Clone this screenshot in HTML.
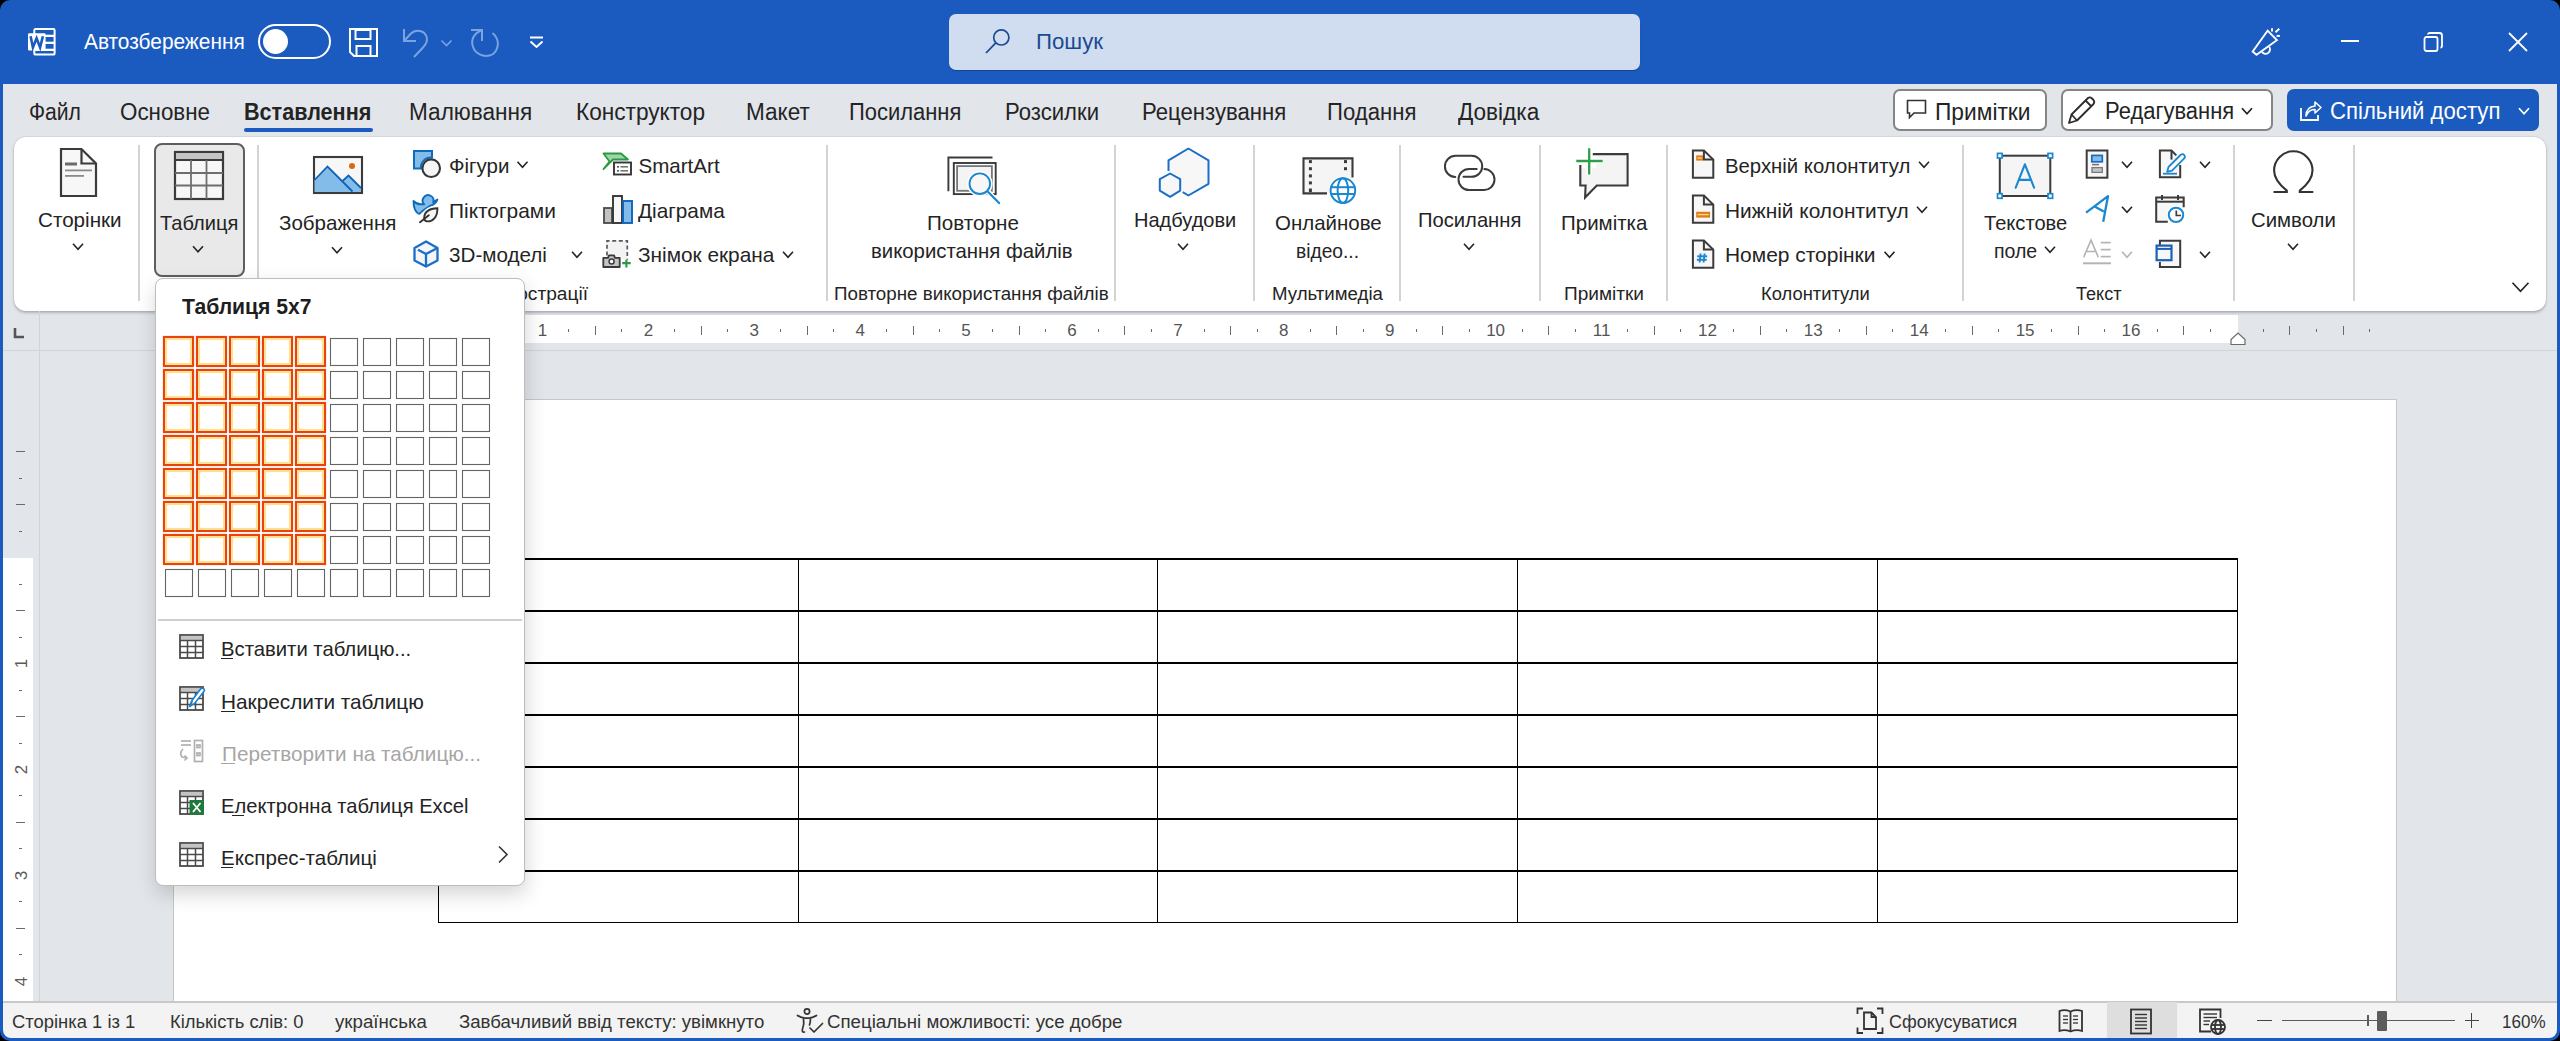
<!DOCTYPE html><html><head><meta charset="utf-8"><style>
html,body{margin:0;padding:0;}
body{width:2560px;height:1041px;position:relative;overflow:hidden;background:#000;font-family:"Liberation Sans",sans-serif;}
.t{position:absolute;white-space:nowrap;line-height:normal;transform-origin:0 0;}
svg{overflow:visible;}
</style></head><body>
<div style="position:absolute;left:0px;top:0px;width:2560px;height:1041px;background:#1b5bbf;border-radius:10px;"></div>
<div style="position:absolute;left:3px;top:84px;width:2554px;height:918px;background:#e2e5ea;"></div>
<div style="position:absolute;left:3px;top:1001px;width:2554px;height:37px;background:#f3f3f3;border-top:2px solid #c8c8c8;box-sizing:border-box;border-radius:0 0 8px 8px;"></div>
<svg style="position:absolute;left:28px;top:28px;" width="28" height="28" viewBox="0 0 28 28">
<rect x="6.3" y="1.1" width="20.3" height="25.5" rx="1.2" fill="none" stroke="#fff" stroke-width="2"/>
<rect x="6" y="6.7" width="21" height="2.3" fill="#fff"/>
<rect x="6" y="13.7" width="21" height="2.3" fill="#fff"/>
<rect x="6" y="20.7" width="21" height="2.3" fill="#fff"/>
<rect x="0" y="5.2" width="17.6" height="17.4" rx="1.3" fill="#fff"/>
<path d="M2.6 8.3 L4.9 19.4 L8.6 10.2 L12.1 19.4 L14.9 8.3" fill="none" stroke="#1b5bbf" stroke-width="2.6" stroke-linejoin="miter"/>
</svg>
<div class="t" style="left:84.20px;top:29.47px;font-size:22.5px;color:#ffffff;transform:scaleX(0.9273);">Автозбереження</div>
<svg style="position:absolute;left:258px;top:24px;" width="73" height="35" viewBox="0 0 73 35"><rect x="1" y="1" width="71" height="33" rx="16.5" fill="none" stroke="#fff" stroke-width="2"/><circle cx="17.5" cy="17.5" r="12.5" fill="#fff"/></svg>
<svg style="position:absolute;left:349px;top:28px;" width="30" height="30" viewBox="0 0 30 30"><path d="M1 1 H28 V28 H5 L1 24 Z" fill="none" stroke="#fff" stroke-width="2"/>
<rect x="6.5" y="2" width="15" height="9" fill="none" stroke="#fff" stroke-width="2"/>
<rect x="7.5" y="18" width="14" height="10" fill="none" stroke="#fff" stroke-width="2"/></svg>
<svg style="position:absolute;left:402px;top:28px;" width="30" height="30" viewBox="0 0 30 30"><g fill="none" stroke="#7aa3e0" stroke-width="2"><path d="M2 1 V13 H14"/><path d="M2.5 12.5 L8.5 6 C13 1.5 22 1.5 24.5 8.5 C26 13 24 16.5 21 19.5 L12 29"/></g></svg>
<svg style="position:absolute;left:440px;top:38px;" width="14" height="9" viewBox="0 0 14 9"><polyline points="1.5,2.5 6.5,7.5 11.5,2.5" fill="none" stroke="#7aa3e0" stroke-width="1.6"/></svg>
<svg style="position:absolute;left:470px;top:28px;" width="30" height="30" viewBox="0 0 30 30"><g fill="none" stroke="#7aa3e0" stroke-width="2"><path d="M1 2 H12 V13"/><path d="M11.5 2.5 C4 5 0.5 12 3 19 C5.5 26 13 29 19.5 27.5 C26 26 29.5 18 27 11 C26 8.5 24.5 6.5 22.5 5"/></g></svg>
<svg style="position:absolute;left:529px;top:36px;" width="16" height="14" viewBox="0 0 16 14"><line x1="1" y1="1.5" x2="14" y2="1.5" stroke="#fff" stroke-width="2"/><polyline points="1.5,5.5 7.5,11 13.5,5.5" fill="none" stroke="#fff" stroke-width="2"/></svg>
<div style="position:absolute;left:949px;top:14px;width:691px;height:56px;background:#d0ddf0;border-radius:7px;box-shadow:0 1px 1px rgba(0,0,0,0.25);"></div>
<svg style="position:absolute;left:984px;top:28px;" width="30" height="28" viewBox="0 0 30 28"><circle cx="17.3" cy="9.4" r="7.6" fill="none" stroke="#1b4a92" stroke-width="1.7"/><line x1="11.8" y1="14.8" x2="2" y2="25" stroke="#1b4a92" stroke-width="1.8"/></svg>
<div class="t" style="left:1035.70px;top:29.17px;font-size:22.5px;color:#1b4a92;transform:scaleX(0.9882);">Пошук</div>
<svg style="position:absolute;left:2250px;top:26px;" width="34" height="34" viewBox="0 0 34 34"><g fill="none" stroke="#fff" stroke-width="1.9" stroke-linejoin="miter">
<path d="M17.6 4.7 L26.9 14.2 L6.5 28.7 L2.7 25.5 Z"/>
<path d="M12 25.9 A4 4 0 0 0 19.2 20.8"/>
<line x1="22" y1="2.3" x2="22" y2="5.5"/><line x1="25.5" y1="6.3" x2="29.3" y2="2.7"/><line x1="26.5" y1="9.9" x2="29.9" y2="9.9"/>
</g></svg>
<div style="position:absolute;left:2341px;top:40px;width:18px;height:2px;background:#fff;"></div>
<svg style="position:absolute;left:2423px;top:32px;" width="22" height="22" viewBox="0 0 22 22"><rect x="1.5" y="5" width="13" height="14" rx="2" fill="none" stroke="#fff" stroke-width="1.8"/><path d="M5 2.5 Q5 1 7 1 H16.5 Q19 1 19 3.5 V13.5 Q19 15.5 17.5 15.5" fill="none" stroke="#fff" stroke-width="1.8"/></svg>
<svg style="position:absolute;left:2508px;top:32px;" width="20" height="20" viewBox="0 0 20 20"><line x1="1" y1="1" x2="19" y2="19" stroke="#fff" stroke-width="1.8"/><line x1="19" y1="1" x2="1" y2="19" stroke="#fff" stroke-width="1.8"/></svg>
<div class="t" style="left:28.80px;top:99.11px;font-size:23px;color:#242424;transform:scaleX(0.9186);">Файл</div>
<div class="t" style="left:119.50px;top:99.11px;font-size:23px;color:#242424;transform:scaleX(0.9719);">Основне</div>
<div class="t" style="left:244.30px;top:99.11px;font-size:23px;color:#242424;font-weight:bold;transform:scaleX(0.9388);">Вставлення</div>
<div style="position:absolute;left:244px;top:128px;width:129px;height:4px;background:#1b5bbf;border-radius:2px;"></div>
<div class="t" style="left:409.20px;top:99.11px;font-size:23px;color:#242424;transform:scaleX(0.9825);">Малювання</div>
<div class="t" style="left:575.80px;top:99.11px;font-size:23px;color:#242424;transform:scaleX(0.9840);">Конструктор</div>
<div class="t" style="left:746.00px;top:99.11px;font-size:23px;color:#242424;transform:scaleX(0.9800);">Макет</div>
<div class="t" style="left:849.40px;top:99.11px;font-size:23px;color:#242424;transform:scaleX(0.9541);">Посилання</div>
<div class="t" style="left:1005.40px;top:99.11px;font-size:23px;color:#242424;transform:scaleX(0.9611);">Розсилки</div>
<div class="t" style="left:1141.50px;top:99.11px;font-size:23px;color:#242424;transform:scaleX(0.9620);">Рецензування</div>
<div class="t" style="left:1327.30px;top:99.11px;font-size:23px;color:#242424;transform:scaleX(0.9623);">Подання</div>
<div class="t" style="left:1458.40px;top:99.11px;font-size:23px;color:#242424;transform:scaleX(0.9819);">Довідка</div>
<div style="position:absolute;left:1893px;top:89px;width:154px;height:42px;background:#fff;border:2px solid #858585;border-radius:7px;box-sizing:border-box;"></div>
<svg style="position:absolute;left:1906px;top:99px;" width="22" height="22" viewBox="0 0 22 22"><path d="M1.5 1.5 H19.5 V14 H8 L3.5 18.5 V14 H1.5 Z" fill="none" stroke="#333" stroke-width="1.6"/></svg>
<div class="t" style="left:1934.50px;top:98.61px;font-size:23px;color:#242424;transform:scaleX(0.9896);">Примітки</div>
<div style="position:absolute;left:2061px;top:89px;width:212px;height:42px;background:#fff;border:2px solid #858585;border-radius:7px;box-sizing:border-box;"></div>
<svg style="position:absolute;left:2066px;top:96px;" width="30" height="30" viewBox="0 0 30 30"><path d="M3 27 L5.5 18.5 L22 2 Q24 0.5 26 2.5 L27.5 4 Q29 6 27.5 8 L11 24.5 Z M19.5 4.5 L25 10 M5.5 18.5 L11 24.5" fill="none" stroke="#2a2a2a" stroke-width="1.8" stroke-linejoin="round"/></svg>
<div class="t" style="left:2104.50px;top:98.31px;font-size:23px;color:#242424;transform:scaleX(0.9549);">Редагування</div>
<svg style="position:absolute;left:2240px;top:106px;" width="14" height="9" viewBox="0 0 14 9"><polyline points="2.0,2.25 7.0,7.75 12.0,2.25" fill="none" stroke="#242424" stroke-width="1.8"/></svg>
<div style="position:absolute;left:2287px;top:89px;width:252px;height:42px;background:#1b5bbf;border-radius:7px;"></div>
<svg style="position:absolute;left:2299px;top:98px;" width="24" height="24" viewBox="0 0 24 24"><path d="M2 10 V22 H19 V17" fill="none" stroke="#fff" stroke-width="1.8"/><path d="M7 18 Q7 9 16 8 V4 L22 9.5 L16 15 V11.5 Q10 11 7 18 Z" fill="none" stroke="#fff" stroke-width="1.6" stroke-linejoin="round"/></svg>
<div class="t" style="left:2329.60px;top:98.31px;font-size:23px;color:#ffffff;transform:scaleX(0.9638);">Спільний доступ</div>
<svg style="position:absolute;left:2517px;top:106px;" width="14" height="9" viewBox="0 0 14 9"><polyline points="2.0,2.25 7.0,7.75 12.0,2.25" fill="none" stroke="#ffffff" stroke-width="1.8"/></svg>
<div style="position:absolute;left:14px;top:137px;width:2532px;height:174px;background:#fff;border-radius:12px;box-shadow:0 0 0 0.6px rgba(0,0,0,0.07),0 1.5px 3px rgba(0,0,0,0.22);"></div>
<div style="position:absolute;left:138px;top:145px;width:2px;height:156px;background:#d3d3d3;"></div>
<div style="position:absolute;left:257px;top:145px;width:2px;height:156px;background:#d3d3d3;"></div>
<div style="position:absolute;left:826px;top:145px;width:2px;height:156px;background:#d3d3d3;"></div>
<div style="position:absolute;left:1114px;top:145px;width:2px;height:156px;background:#d3d3d3;"></div>
<div style="position:absolute;left:1253px;top:145px;width:2px;height:156px;background:#d3d3d3;"></div>
<div style="position:absolute;left:1399px;top:145px;width:2px;height:156px;background:#d3d3d3;"></div>
<div style="position:absolute;left:1539px;top:145px;width:2px;height:156px;background:#d3d3d3;"></div>
<div style="position:absolute;left:1666px;top:145px;width:2px;height:156px;background:#d3d3d3;"></div>
<div style="position:absolute;left:1962px;top:145px;width:2px;height:156px;background:#d3d3d3;"></div>
<div style="position:absolute;left:2233px;top:145px;width:2px;height:156px;background:#d3d3d3;"></div>
<div style="position:absolute;left:2353px;top:145px;width:2px;height:156px;background:#d3d3d3;"></div>
<svg style="position:absolute;left:59px;top:147px;" width="40" height="52" viewBox="0 0 40 52"><path d="M2 2 H22.5 L37 16.5 V49 H2 Z" fill="#f7f7f7" stroke="#3b3b3b" stroke-width="2.2"/>
<path d="M22.5 2 V16.5 H37" fill="none" stroke="#3b3b3b" stroke-width="2.2"/>
<rect x="6" y="15.5" width="12" height="3" fill="#6b6b6b"/>
<rect x="6" y="22.5" width="27" height="1.8" fill="#8a8a8a"/>
<rect x="6" y="28" width="19" height="1.8" fill="#8a8a8a"/></svg>
<div class="t" style="left:37.70px;top:207.82px;font-size:20.6px;color:#242424;transform:scaleX(1.0024);">Сторінки</div>
<svg style="position:absolute;left:71px;top:242px;" width="14" height="9" viewBox="0 0 14 9"><polyline points="2.0,1.75 7.0,7.25 12.0,1.75" fill="none" stroke="#242424" stroke-width="1.6"/></svg>
<div style="position:absolute;left:154px;top:143px;width:91px;height:134px;background:#e9e9e9;border:2px solid #5e5e5e;border-radius:8px;box-sizing:border-box;"></div>
<svg style="position:absolute;left:173px;top:150px;" width="52" height="52" viewBox="0 0 52 52"><rect x="2" y="2" width="48" height="47" fill="#f7f7f7" stroke="#3b3b3b" stroke-width="2.2"/>
<rect x="3" y="3" width="46" height="6.5" fill="#c4c4c4"/>
<line x1="2" y1="10" x2="50" y2="10" stroke="#3b3b3b" stroke-width="2"/>
<line x1="2" y1="23" x2="50" y2="23" stroke="#6e6e6e" stroke-width="1.8"/>
<line x1="2" y1="35.5" x2="50" y2="35.5" stroke="#6e6e6e" stroke-width="1.8"/>
<line x1="18" y1="10" x2="18" y2="49" stroke="#6e6e6e" stroke-width="1.8"/>
<line x1="33.5" y1="10" x2="33.5" y2="49" stroke="#6e6e6e" stroke-width="1.8"/></svg>
<div class="t" style="left:159.80px;top:211.22px;font-size:20.6px;color:#242424;transform:scaleX(0.9739);">Таблиця</div>
<svg style="position:absolute;left:191px;top:244px;" width="14" height="9" viewBox="0 0 14 9"><polyline points="2.0,2.25 7.0,7.75 12.0,2.25" fill="none" stroke="#242424" stroke-width="1.6"/></svg>
<svg style="position:absolute;left:312px;top:155px;" width="52" height="40" viewBox="0 0 52 40"><rect x="2" y="2" width="48" height="36" fill="#f7f7f7" stroke="#3b3b3b" stroke-width="2.1"/>
<path d="M2.5 25 L15.5 11.5 L30.5 26 L36.5 20.6 L49 33 V37 H2.5 Z" fill="#83bbe9"/>
<path d="M2.5 25 L15.5 11.5 L40.5 36.5" fill="none" stroke="#0f64b8" stroke-width="1.8"/>
<path d="M30.5 26 L36.5 20.6 L49 33" fill="none" stroke="#0f64b8" stroke-width="1.8"/>
<circle cx="40" cy="11" r="3" fill="#d86a0f"/></svg>
<div class="t" style="left:278.80px;top:210.82px;font-size:20.6px;color:#242424;transform:scaleX(0.9975);">Зображення</div>
<svg style="position:absolute;left:330px;top:245px;" width="14" height="9" viewBox="0 0 14 9"><polyline points="2.0,2.25 7.0,7.75 12.0,2.25" fill="none" stroke="#242424" stroke-width="1.6"/></svg>
<svg style="position:absolute;left:412px;top:149px;" width="32" height="32" viewBox="0 0 32 32"><path d="M2 2 H20 V8.5 A10 10 0 0 0 9 19.5 H2 Z" fill="#83bbe9" stroke="#0f6cbd" stroke-width="2"/>
<circle cx="19.2" cy="19.2" r="8.8" fill="#f5f5f5" stroke="#363636" stroke-width="2.1"/></svg>
<div class="t" style="left:448.60px;top:153.72px;font-size:20.6px;color:#242424;transform:scaleX(0.9934);">Фігури</div>
<svg style="position:absolute;left:516px;top:160px;" width="14" height="9" viewBox="0 0 14 9"><polyline points="1.5,1.75 6.5,7.25 11.5,1.75" fill="none" stroke="#242424" stroke-width="1.6"/></svg>
<svg style="position:absolute;left:412px;top:194px;" width="30" height="32" viewBox="0 0 30 32"><path d="M1.5 7 Q4.5 10.4 9 10.3 H12.2 A5.4 5.4 0 1 1 21.2 8.3 L25.4 5.6 Q24 10.5 17.8 12 L12.5 15.5 Q8.5 18.5 7.2 20 Q1.5 17.5 1.5 7 Z" fill="#83bbe9" stroke="#0f6cbd" stroke-width="1.9" stroke-linejoin="round"/>
<path d="M25.4 14.3 C25.8 23 20.5 28 14.8 27.3 Q12.3 26.8 12.2 24.5 C12 17.5 17.5 14.5 25.4 14.3 Z" fill="#f5f5f5" stroke="#fff" stroke-width="5"/>
<path d="M25.4 14.3 C25.8 23 20.5 28 14.8 27.3 Q12.3 26.8 12.2 24.5 C12 17.5 17.5 14.5 25.4 14.3 Z" fill="#f5f5f5" stroke="#333" stroke-width="1.9"/>
<path d="M8 28.2 L16.8 21.3" stroke="#333" stroke-width="1.9" stroke-linecap="round"/></svg>
<div class="t" style="left:449.40px;top:198.52px;font-size:20.6px;color:#242424;transform:scaleX(1.0142);">Піктограми</div>
<svg style="position:absolute;left:413px;top:240px;" width="27" height="28" viewBox="0 0 27 28"><g fill="#f5f5f5" stroke="#1a6ec8" stroke-width="2.3" stroke-linejoin="round">
<path d="M13 1.5 L24.5 8 V20.5 L13 26.5 L1.5 20.5 V8 Z"/>
<path d="M24.5 8 L13 14 V26.5 M13 14 L5 9.7" fill="none"/>
</g></svg>
<div class="t" style="left:448.60px;top:242.62px;font-size:20.6px;color:#242424;transform:scaleX(1.0020);">3D-моделі</div>
<svg style="position:absolute;left:570px;top:250px;" width="14" height="9" viewBox="0 0 14 9"><polyline points="2.0,1.75 7.0,7.25 12.0,1.75" fill="none" stroke="#242424" stroke-width="1.6"/></svg>
<svg style="position:absolute;left:602px;top:152px;" width="31" height="25" viewBox="0 0 31 25"><path d="M1.5 1.5 H19 L26 7.5 H11 L1.5 17 L7.5 9.5 Z" fill="#9fd6a8" stroke="#2b9a44" stroke-width="1.8" stroke-linejoin="round"/>
<rect x="12" y="10.5" width="17" height="12" fill="#fff" stroke="#363636" stroke-width="1.9"/>
<rect x="15" y="14" width="2" height="1.6" fill="#555"/><rect x="18.5" y="14" width="7.5" height="1.6" fill="#777"/>
<rect x="15" y="18" width="2" height="1.6" fill="#555"/><rect x="18.5" y="18" width="7.5" height="1.6" fill="#777"/></svg>
<div class="t" style="left:638.40px;top:153.72px;font-size:20.6px;color:#242424;">SmartArt</div>
<svg style="position:absolute;left:602px;top:194px;" width="31" height="31" viewBox="0 0 31 31"><rect x="2" y="14" width="8" height="15" fill="#c2c2c2" stroke="#4a4a4a" stroke-width="1.8"/>
<rect x="11" y="2" width="9" height="27" fill="#f7f7f7" stroke="#363636" stroke-width="1.9"/>
<rect x="21" y="7" width="9" height="22" fill="#83bbe9" stroke="#0f64b8" stroke-width="1.9"/></svg>
<div class="t" style="left:638.20px;top:199.02px;font-size:20.6px;color:#242424;transform:scaleX(1.0081);">Діаграма</div>
<svg style="position:absolute;left:602px;top:239px;" width="31" height="31" viewBox="0 0 31 31"><path d="M5 16.4 V1.8 H25.3 V20.7" fill="#f3f3f3" stroke="#5a5a5a" stroke-width="1.7" stroke-dasharray="4 2.6"/>
<path d="M1.3 18.9 H6 L7 16.4 H12 L13 18.9 H17.7 V28 H1.3 Z" fill="#c4c4c4" stroke="#3a3a3a" stroke-width="1.8" stroke-linejoin="round"/>
<circle cx="9.6" cy="22.6" r="2.5" fill="#fff" stroke="#3a3a3a" stroke-width="1.5"/>
<path d="M24.4 20.7 V28.6 M20.2 24.1 H28.7" stroke="#2b9a44" stroke-width="2.1"/></svg>
<div class="t" style="left:638.30px;top:242.62px;font-size:20.6px;color:#242424;transform:scaleX(1.0104);">Знімок екрана</div>
<svg style="position:absolute;left:781px;top:250px;" width="14" height="9" viewBox="0 0 14 9"><polyline points="2.0,1.75 7.0,7.25 12.0,1.75" fill="none" stroke="#242424" stroke-width="1.6"/></svg>
<div class="t" style="left:497.00px;top:284.47px;font-size:17.5px;color:#242424;transform:scaleX(1.0938);">Ілюстрації</div>
<svg style="position:absolute;left:946px;top:155px;" width="56" height="52" viewBox="0 0 56 52"><path d="M2.4 36.2 V2.5 H46.5" fill="none" stroke="#3a3a3a" stroke-width="1.9"/>
<rect x="7.8" y="8" width="41.9" height="31.1" fill="#fff" stroke="#3a3a3a" stroke-width="1.9"/>
<rect x="11.1" y="11.1" width="34.8" height="24.7" fill="#f4f4f4" stroke="#777" stroke-width="1.8"/>
<circle cx="33.8" cy="28.7" r="10.3" fill="#f7f7f7" stroke="#fff" stroke-width="5"/>
<line x1="41.9" y1="36.8" x2="53.1" y2="48.1" stroke="#fff" stroke-width="5"/>
<circle cx="33.8" cy="28.7" r="10.3" fill="#f7f7f7" stroke="#1b87d0" stroke-width="1.9"/>
<line x1="41.9" y1="36.8" x2="53.1" y2="48.1" stroke="#1b87d0" stroke-width="2.2" stroke-linecap="round"/></svg>
<div class="t" style="left:926.50px;top:210.82px;font-size:20.6px;color:#242424;transform:scaleX(1.0022);">Повторне</div>
<div class="t" style="left:871.40px;top:239.22px;font-size:20.6px;color:#242424;transform:scaleX(0.9878);">використання файлів</div>
<div class="t" style="left:834.40px;top:284.47px;font-size:17.5px;color:#242424;transform:scaleX(1.0718);">Повторне використання файлів</div>
<svg style="position:absolute;left:1157px;top:147px;" width="54" height="54" viewBox="0 0 54 54"><g fill="#f7f7f7" stroke="#1a6ec8" stroke-width="2" stroke-linejoin="round">
<path d="M11.5 24 V13.4 L31.4 1.5 L51.5 13.4 V36.8 L31.4 48.5 L25.7 45.2"/>
<path d="M13.1 26.5 L23.2 32.2 V43.6 L13.1 49.8 L2.8 43.6 V32.2 Z"/>
</g></svg>
<div class="t" style="left:1133.70px;top:207.92px;font-size:20.6px;color:#242424;transform:scaleX(0.9724);">Надбудови</div>
<svg style="position:absolute;left:1176px;top:242px;" width="14" height="9" viewBox="0 0 14 9"><polyline points="2.0,1.75 7.0,7.25 12.0,1.75" fill="none" stroke="#242424" stroke-width="1.6"/></svg>
<svg style="position:absolute;left:1302px;top:157px;" width="57" height="50" viewBox="0 0 57 50"><path d="M25 36.4 H1.5 V1.4 H50.5 V20.5" fill="#f5f5f5" stroke="#3b3b3b" stroke-width="2.1"/>
<g fill="#3b3b3b"><rect x="6.9" y="3.1" width="3" height="3"/><rect x="6.9" y="10.2" width="3" height="3"/><rect x="6.9" y="17.4" width="3" height="3"/><rect x="6.9" y="24.4" width="3" height="3"/><rect x="6.9" y="31.5" width="3" height="3.5"/>
<rect x="42" y="3.1" width="3" height="3"/><rect x="42" y="10.2" width="3" height="3"/></g>
<circle cx="40.9" cy="33.6" r="14" fill="#fff"/>
<g fill="none" stroke="#1b87d0" stroke-width="2"><circle cx="40.9" cy="33.6" r="12.3"/><ellipse cx="40.9" cy="33.6" rx="5.3" ry="12.3"/><line x1="28.6" y1="30.2" x2="53.2" y2="30.2"/><line x1="28.6" y1="37" x2="53.2" y2="37"/></g></svg>
<div class="t" style="left:1274.60px;top:210.52px;font-size:20.6px;color:#242424;transform:scaleX(0.9944);">Онлайнове</div>
<div class="t" style="left:1296.00px;top:239.22px;font-size:20.6px;color:#242424;transform:scaleX(0.9320);">відео...</div>
<div class="t" style="left:1271.70px;top:284.47px;font-size:17.5px;color:#242424;transform:scaleX(1.0653);">Мультимедіа</div>
<svg style="position:absolute;left:1444px;top:154px;" width="52" height="40" viewBox="0 0 52 40"><g fill="none" stroke="#3b3b3b" stroke-width="2" stroke-linecap="round">
<path d="M11.3 23 A10.5 10.5 0 0 1 11.8 1.8 H27.7 A10.5 10.5 0 0 1 27.7 22.8 H19.5"/>
<path d="M32.7 15 H25 A10.5 10.5 0 0 0 25 36 H39.6 A10.5 10.5 0 0 0 40.4 15"/>
</g></svg>
<div class="t" style="left:1418.30px;top:207.92px;font-size:20.6px;color:#242424;transform:scaleX(0.9801);">Посилання</div>
<svg style="position:absolute;left:1462px;top:242px;" width="14" height="9" viewBox="0 0 14 9"><polyline points="2.0,1.75 7.0,7.25 12.0,1.75" fill="none" stroke="#242424" stroke-width="1.6"/></svg>
<svg style="position:absolute;left:1574px;top:146px;" width="57" height="54" viewBox="0 0 57 54"><path d="M6.3 19 V39.5 H11.6 L11.1 51.6 L22.8 39.5 H53.6 V8.1 H18.8" fill="#f4f4f4" stroke="#3b3b3b" stroke-width="2.1" stroke-linejoin="miter"/>
<rect x="8" y="10" width="14" height="12" fill="#fff"/>
<path d="M15.2 2.3 V28.6 M2.3 15 H28.7" stroke="#fff" stroke-width="5"/>
<path d="M15.2 2.3 V28.6 M2.3 15 H28.7" stroke="#2f9e4b" stroke-width="2.3"/></svg>
<div class="t" style="left:1561.40px;top:210.52px;font-size:20.6px;color:#242424;transform:scaleX(0.9954);">Примітка</div>
<div class="t" style="left:1564.00px;top:284.47px;font-size:17.5px;color:#242424;transform:scaleX(1.0884);">Примітки</div>
<svg style="position:absolute;left:1691px;top:149px;" width="24" height="31" viewBox="0 0 24 31"><path d="M1.9 1.5 H12.9 L22.3 10.6 V28.7 H1.9 Z" fill="#f7f7f7" stroke="#3b3b3b" stroke-width="2"/><path d="M12.9 1.5 V10.6 H22.3" fill="none" stroke="#3b3b3b" stroke-width="2"/><rect x="5.2" y="6.4" width="6.8" height="5.2" fill="#e07b12"/><rect x="6.5" y="8.4" width="4.5" height="1.3" fill="#ffd596"/></svg>
<div class="t" style="left:1725.30px;top:153.72px;font-size:20.6px;color:#242424;transform:scaleX(0.9872);">Верхній колонтитул</div>
<svg style="position:absolute;left:1917px;top:160px;" width="14" height="9" viewBox="0 0 14 9"><polyline points="2.0,1.75 7.0,7.25 12.0,1.75" fill="none" stroke="#242424" stroke-width="1.6"/></svg>
<svg style="position:absolute;left:1691px;top:194px;" width="24" height="31" viewBox="0 0 24 31"><path d="M1.9 1.5 H12.9 L22.3 10.6 V28.7 H1.9 Z" fill="#f7f7f7" stroke="#3b3b3b" stroke-width="2"/><path d="M12.9 1.5 V10.6 H22.3" fill="none" stroke="#3b3b3b" stroke-width="2"/><rect x="5.2" y="17.8" width="13.8" height="5.8" fill="#e07b12"/><rect x="6.6" y="19.9" width="11" height="1.4" fill="#ffd596"/></svg>
<div class="t" style="left:1725.30px;top:199.02px;font-size:20.6px;color:#242424;transform:scaleX(1.0138);">Нижній колонтитул</div>
<svg style="position:absolute;left:1915px;top:205px;" width="14" height="9" viewBox="0 0 14 9"><polyline points="2.0,1.75 7.0,7.25 12.0,1.75" fill="none" stroke="#242424" stroke-width="1.6"/></svg>
<svg style="position:absolute;left:1691px;top:239px;" width="24" height="31" viewBox="0 0 24 31"><path d="M1.9 1.5 H12.9 L22.3 10.6 V28.7 H1.9 Z" fill="#f7f7f7" stroke="#3b3b3b" stroke-width="2"/><path d="M12.9 1.5 V10.6 H22.3" fill="none" stroke="#3b3b3b" stroke-width="2"/><g stroke="#1b87d0" stroke-width="1.9"><line x1="9.6" y1="14.5" x2="8.6" y2="23.5"/><line x1="13.6" y1="14.5" x2="12.6" y2="23.5"/><line x1="6.2" y1="17.3" x2="16.2" y2="17.3"/><line x1="5.8" y1="20.8" x2="15.8" y2="20.8"/></g></svg>
<div class="t" style="left:1725.30px;top:242.62px;font-size:20.6px;color:#242424;transform:scaleX(1.0169);">Номер сторінки</div>
<svg style="position:absolute;left:1882px;top:250px;" width="14" height="9" viewBox="0 0 14 9"><polyline points="2.5,1.75 7.5,7.25 12.5,1.75" fill="none" stroke="#242424" stroke-width="1.6"/></svg>
<div class="t" style="left:1761.00px;top:284.47px;font-size:17.5px;color:#242424;transform:scaleX(1.0492);">Колонтитули</div>
<svg style="position:absolute;left:1996px;top:152px;" width="58" height="48" viewBox="0 0 58 48"><rect x="3.8" y="3.7" width="50.5" height="40.3" fill="#f5f5f5" stroke="#3b3b3b" stroke-width="2"/>
<g fill="#fff" stroke="#1b87d0" stroke-width="1.7"><rect x="1.5" y="1.4" width="4.6" height="4.6"/><rect x="52" y="1.4" width="4.6" height="4.6"/><rect x="1.5" y="41.7" width="4.6" height="4.6"/><rect x="52" y="41.7" width="4.6" height="4.6"/></g>
<path d="M19.7 35.7 L28.9 12.3 L38.1 35.7 M23.5 27.9 H34.5" fill="none" stroke="#1b87d0" stroke-width="2.1" stroke-linecap="round" stroke-linejoin="round"/></svg>
<div class="t" style="left:1983.70px;top:210.52px;font-size:20.6px;color:#242424;transform:scaleX(0.9766);">Текстове</div>
<div class="t" style="left:1993.50px;top:239.22px;font-size:20.6px;color:#242424;transform:scaleX(0.9474);">поле</div>
<svg style="position:absolute;left:2043px;top:245px;" width="14" height="9" viewBox="0 0 14 9"><polyline points="2.0,1.75 7.0,7.25 12.0,1.75" fill="none" stroke="#242424" stroke-width="1.6"/></svg>
<svg style="position:absolute;left:2085px;top:149px;" width="24" height="30" viewBox="0 0 24 30"><rect x="1.7" y="1.5" width="20.7" height="27.2" fill="#f7f7f7" stroke="#3b3b3b" stroke-width="2"/>
<rect x="6.8" y="6.4" width="10.5" height="6.4" fill="#83bbe9" stroke="#1b6cc0" stroke-width="1.7"/>
<rect x="7" y="14.8" width="7" height="1.6" fill="#777"/>
<rect x="7" y="18.6" width="10.3" height="4.8" fill="#c4c4c4" stroke="#7a7a7a" stroke-width="1.3"/></svg>
<svg style="position:absolute;left:2120px;top:160px;" width="14" height="9" viewBox="0 0 14 9"><polyline points="2.0,1.75 7.0,7.25 12.0,1.75" fill="none" stroke="#242424" stroke-width="1.6"/></svg>
<svg style="position:absolute;left:2084px;top:194px;" width="28" height="30" viewBox="0 0 28 30"><path d="M2.1 18.7 L24 2.2 L19.2 27.8 M10.6 12.6 L19.8 17.5" fill="none" stroke="#1b87d0" stroke-width="2.3" stroke-linejoin="round"/></svg>
<svg style="position:absolute;left:2120px;top:205px;" width="14" height="9" viewBox="0 0 14 9"><polyline points="2.0,1.75 7.0,7.25 12.0,1.75" fill="none" stroke="#242424" stroke-width="1.6"/></svg>
<svg style="position:absolute;left:2082px;top:239px;" width="30" height="28" viewBox="0 0 30 28"><path d="M1.7 18.2 L9 1.1 L16.3 18.2 M4.3 12.5 H13.7" fill="none" stroke="#b4b4b4" stroke-width="1.6"/>
<g stroke="#b4b4b4" stroke-width="1.7"><line x1="18.7" y1="3.6" x2="28.7" y2="3.6"/><line x1="18.7" y1="10.6" x2="28.7" y2="10.6"/><line x1="18.7" y1="17.6" x2="28.7" y2="17.6"/><line x1="1" y1="24.3" x2="29" y2="24.3" stroke-width="2"/></g></svg>
<svg style="position:absolute;left:2120px;top:250px;" width="14" height="9" viewBox="0 0 14 9"><polyline points="2.0,1.75 7.0,7.25 12.0,1.75" fill="none" stroke="#b4b4b4" stroke-width="1.6"/></svg>
<svg style="position:absolute;left:2158px;top:149px;" width="28" height="30" viewBox="0 0 28 30"><path d="M22.2 16 V28.3 H1.9 V1.5 H13.5 L18.3 6.4" fill="#f7f7f7" stroke="#3b3b3b" stroke-width="2"/>
<path d="M13.5 1.5 V10.6" fill="none" stroke="#3b3b3b" stroke-width="2"/>
<path d="M9.2 22.8 L10.5 18 L22.5 6 Q24.5 4.3 26.2 6 Q27.8 7.8 26 9.6 L14 21.6 Z" fill="#fff" stroke="#1b87d0" stroke-width="1.8" stroke-linejoin="round"/>
<line x1="5" y1="24.7" x2="19" y2="24.7" stroke="#1b87d0" stroke-width="1.8"/></svg>
<svg style="position:absolute;left:2198px;top:160px;" width="14" height="9" viewBox="0 0 14 9"><polyline points="2.0,1.75 7.0,7.25 12.0,1.75" fill="none" stroke="#242424" stroke-width="1.6"/></svg>
<svg style="position:absolute;left:2155px;top:194px;" width="31" height="31" viewBox="0 0 31 31"><path d="M12.8 27.8 H1.2 V3.4 H28.7 V13.2" fill="#f7f7f7" stroke="#3b3b3b" stroke-width="2"/>
<path d="M1.2 7.7 H28.7" stroke="#3b3b3b" stroke-width="2"/>
<line x1="7" y1="1" x2="7" y2="6" stroke="#3b3b3b" stroke-width="2"/><line x1="23" y1="1" x2="23" y2="6" stroke="#3b3b3b" stroke-width="2"/>
<circle cx="21" cy="20.9" r="9.2" fill="#fff"/>
<circle cx="21" cy="20.9" r="7.2" fill="#fff" stroke="#1b87d0" stroke-width="2"/>
<path d="M21.3 16.5 V21.5 H26" fill="none" stroke="#3b3b3b" stroke-width="1.7"/></svg>
<svg style="position:absolute;left:2155px;top:239px;" width="29" height="31" viewBox="0 0 29 31"><path d="M4.9 6 V1.7 H25.2 V28 H4.9 V23" fill="#f7f7f7" stroke="#3b3b3b" stroke-width="2"/>
<rect x="1.6" y="6.6" width="14.9" height="14.6" fill="#f7f7f7" stroke="#1b5fb8" stroke-width="2.2"/>
<line x1="1.6" y1="9.9" x2="16.5" y2="9.9" stroke="#1b5fb8" stroke-width="2"/></svg>
<svg style="position:absolute;left:2198px;top:250px;" width="14" height="9" viewBox="0 0 14 9"><polyline points="2.0,1.75 7.0,7.25 12.0,1.75" fill="none" stroke="#242424" stroke-width="1.6"/></svg>
<div class="t" style="left:2076.00px;top:284.47px;font-size:17.5px;color:#242424;transform:scaleX(1.0340);">Текст</div>
<svg style="position:absolute;left:2270px;top:150px;" width="47" height="46" viewBox="0 0 47 46"><path d="M3.5 42 H16.8 V40.6 C8.5 34 4.1 27.5 4.1 20.5 A19.2 19.2 0 0 1 42.5 20.5 C42.5 27.5 38.1 34 29.8 40.6 V42 H43.3" fill="none" stroke="#333" stroke-width="2.1"/></svg>
<div class="t" style="left:2251.40px;top:207.92px;font-size:20.6px;color:#242424;transform:scaleX(0.9895);">Символи</div>
<svg style="position:absolute;left:2286px;top:242px;" width="14" height="9" viewBox="0 0 14 9"><polyline points="2.0,1.75 7.0,7.25 12.0,1.75" fill="none" stroke="#242424" stroke-width="1.6"/></svg>
<svg style="position:absolute;left:2510px;top:281px;" width="20" height="12" viewBox="0 0 20 12"><polyline points="2.5,1.75 10.5,10.25 18.5,1.75" fill="none" stroke="#242424" stroke-width="1.7"/></svg>
<div style="position:absolute;left:3px;top:350px;width:2554px;height:1px;background:#d3d3d3;"></div>
<div style="position:absolute;left:39px;top:311px;width:1px;height:690px;background:#d3d3d3;"></div>
<svg style="position:absolute;left:13px;top:327px;" width="13" height="13" viewBox="0 0 13 13"><path d="M2 1 V10 H11" fill="none" stroke="#555" stroke-width="2.6"/></svg>
<div style="position:absolute;left:436px;top:315px;width:1802px;height:28px;background:#fff;"></div>
<div style="position:absolute;left:173px;top:399px;width:2224px;height:602px;background:#fff;border:1px solid #c6c6c6;border-bottom:none;box-sizing:border-box;"></div>
<div style="position:absolute;left:3px;top:558px;width:30px;height:443px;background:#fff;"></div>
<div class="t" style="left:537.75px;top:321.33px;font-size:17px;color:#555555;">1</div>
<div style="position:absolute;left:568px;top:329px;width:1px;height:3px;background:#6a6a6a;"></div>
<div style="position:absolute;left:595px;top:326px;width:1px;height:9px;background:#6a6a6a;"></div>
<div style="position:absolute;left:621px;top:329px;width:1px;height:3px;background:#6a6a6a;"></div>
<div class="t" style="left:643.65px;top:321.33px;font-size:17px;color:#555555;">2</div>
<div style="position:absolute;left:674px;top:329px;width:1px;height:3px;background:#6a6a6a;"></div>
<div style="position:absolute;left:701px;top:326px;width:1px;height:9px;background:#6a6a6a;"></div>
<div style="position:absolute;left:727px;top:329px;width:1px;height:3px;background:#6a6a6a;"></div>
<div class="t" style="left:749.55px;top:321.33px;font-size:17px;color:#555555;">3</div>
<div style="position:absolute;left:780px;top:329px;width:1px;height:3px;background:#6a6a6a;"></div>
<div style="position:absolute;left:807px;top:326px;width:1px;height:9px;background:#6a6a6a;"></div>
<div style="position:absolute;left:833px;top:329px;width:1px;height:3px;background:#6a6a6a;"></div>
<div class="t" style="left:855.45px;top:321.33px;font-size:17px;color:#555555;">4</div>
<div style="position:absolute;left:886px;top:329px;width:1px;height:3px;background:#6a6a6a;"></div>
<div style="position:absolute;left:913px;top:326px;width:1px;height:9px;background:#6a6a6a;"></div>
<div style="position:absolute;left:939px;top:329px;width:1px;height:3px;background:#6a6a6a;"></div>
<div class="t" style="left:961.35px;top:321.33px;font-size:17px;color:#555555;">5</div>
<div style="position:absolute;left:992px;top:329px;width:1px;height:3px;background:#6a6a6a;"></div>
<div style="position:absolute;left:1019px;top:326px;width:1px;height:9px;background:#6a6a6a;"></div>
<div style="position:absolute;left:1045px;top:329px;width:1px;height:3px;background:#6a6a6a;"></div>
<div class="t" style="left:1067.25px;top:321.33px;font-size:17px;color:#555555;">6</div>
<div style="position:absolute;left:1098px;top:329px;width:1px;height:3px;background:#6a6a6a;"></div>
<div style="position:absolute;left:1124px;top:326px;width:1px;height:9px;background:#6a6a6a;"></div>
<div style="position:absolute;left:1151px;top:329px;width:1px;height:3px;background:#6a6a6a;"></div>
<div class="t" style="left:1173.15px;top:321.33px;font-size:17px;color:#555555;">7</div>
<div style="position:absolute;left:1204px;top:329px;width:1px;height:3px;background:#6a6a6a;"></div>
<div style="position:absolute;left:1230px;top:326px;width:1px;height:9px;background:#6a6a6a;"></div>
<div style="position:absolute;left:1257px;top:329px;width:1px;height:3px;background:#6a6a6a;"></div>
<div class="t" style="left:1279.05px;top:321.33px;font-size:17px;color:#555555;">8</div>
<div style="position:absolute;left:1310px;top:329px;width:1px;height:3px;background:#6a6a6a;"></div>
<div style="position:absolute;left:1336px;top:326px;width:1px;height:9px;background:#6a6a6a;"></div>
<div style="position:absolute;left:1363px;top:329px;width:1px;height:3px;background:#6a6a6a;"></div>
<div class="t" style="left:1384.95px;top:321.33px;font-size:17px;color:#555555;">9</div>
<div style="position:absolute;left:1416px;top:329px;width:1px;height:3px;background:#6a6a6a;"></div>
<div style="position:absolute;left:1442px;top:326px;width:1px;height:9px;background:#6a6a6a;"></div>
<div style="position:absolute;left:1469px;top:329px;width:1px;height:3px;background:#6a6a6a;"></div>
<div class="t" style="left:1486.15px;top:321.33px;font-size:17px;color:#555555;">10</div>
<div style="position:absolute;left:1522px;top:329px;width:1px;height:3px;background:#6a6a6a;"></div>
<div style="position:absolute;left:1548px;top:326px;width:1px;height:9px;background:#6a6a6a;"></div>
<div style="position:absolute;left:1575px;top:329px;width:1px;height:3px;background:#6a6a6a;"></div>
<div class="t" style="left:1592.70px;top:321.33px;font-size:17px;color:#555555;">11</div>
<div style="position:absolute;left:1627px;top:329px;width:1px;height:3px;background:#6a6a6a;"></div>
<div style="position:absolute;left:1654px;top:326px;width:1px;height:9px;background:#6a6a6a;"></div>
<div style="position:absolute;left:1680px;top:329px;width:1px;height:3px;background:#6a6a6a;"></div>
<div class="t" style="left:1697.95px;top:321.33px;font-size:17px;color:#555555;">12</div>
<div style="position:absolute;left:1733px;top:329px;width:1px;height:3px;background:#6a6a6a;"></div>
<div style="position:absolute;left:1760px;top:326px;width:1px;height:9px;background:#6a6a6a;"></div>
<div style="position:absolute;left:1786px;top:329px;width:1px;height:3px;background:#6a6a6a;"></div>
<div class="t" style="left:1803.85px;top:321.33px;font-size:17px;color:#555555;">13</div>
<div style="position:absolute;left:1839px;top:329px;width:1px;height:3px;background:#6a6a6a;"></div>
<div style="position:absolute;left:1866px;top:326px;width:1px;height:9px;background:#6a6a6a;"></div>
<div style="position:absolute;left:1892px;top:329px;width:1px;height:3px;background:#6a6a6a;"></div>
<div class="t" style="left:1909.75px;top:321.33px;font-size:17px;color:#555555;">14</div>
<div style="position:absolute;left:1945px;top:329px;width:1px;height:3px;background:#6a6a6a;"></div>
<div style="position:absolute;left:1972px;top:326px;width:1px;height:9px;background:#6a6a6a;"></div>
<div style="position:absolute;left:1998px;top:329px;width:1px;height:3px;background:#6a6a6a;"></div>
<div class="t" style="left:2015.65px;top:321.33px;font-size:17px;color:#555555;">15</div>
<div style="position:absolute;left:2051px;top:329px;width:1px;height:3px;background:#6a6a6a;"></div>
<div style="position:absolute;left:2078px;top:326px;width:1px;height:9px;background:#6a6a6a;"></div>
<div style="position:absolute;left:2104px;top:329px;width:1px;height:3px;background:#6a6a6a;"></div>
<div class="t" style="left:2121.55px;top:321.33px;font-size:17px;color:#555555;">16</div>
<div style="position:absolute;left:2157px;top:329px;width:1px;height:3px;background:#6a6a6a;"></div>
<div style="position:absolute;left:2183px;top:326px;width:1px;height:9px;background:#6a6a6a;"></div>
<div style="position:absolute;left:2210px;top:329px;width:1px;height:3px;background:#6a6a6a;"></div>
<div style="position:absolute;left:2263px;top:329px;width:1px;height:3px;background:#6a6a6a;"></div>
<div style="position:absolute;left:2289px;top:326px;width:1px;height:9px;background:#6a6a6a;"></div>
<div style="position:absolute;left:2316px;top:329px;width:1px;height:3px;background:#6a6a6a;"></div>
<div style="position:absolute;left:2369px;top:329px;width:1px;height:3px;background:#6a6a6a;"></div>
<div style="position:absolute;left:2343px;top:326px;width:1px;height:9px;background:#6a6a6a;"></div>
<svg style="position:absolute;left:2230px;top:332px;" width="17" height="14" viewBox="0 0 17 14"><path d="M1 12.5 V7.5 L8 1 L15 7.5 V12.5 Z" fill="#fff" stroke="#6a6a6a" stroke-width="1.2"/></svg>
<div style="position:absolute;left:16px;top:451px;width:9px;height:1px;background:#6a6a6a;"></div>
<div style="position:absolute;left:19px;top:478px;width:3px;height:1px;background:#6a6a6a;"></div>
<div style="position:absolute;left:16px;top:504px;width:9px;height:1px;background:#6a6a6a;"></div>
<div style="position:absolute;left:19px;top:531px;width:3px;height:1px;background:#6a6a6a;"></div>
<div style="position:absolute;left:19px;top:584px;width:3px;height:1px;background:#6a6a6a;"></div>
<div style="position:absolute;left:16px;top:610px;width:9px;height:1px;background:#6a6a6a;"></div>
<div style="position:absolute;left:19px;top:637px;width:3px;height:1px;background:#6a6a6a;"></div>
<div class="t" style="left:13px;top:654.10px;width:17px;height:19px;font-size:17px;line-height:19px;color:#5a5a5a;text-align:center;transform:rotate(-90deg);transform-origin:50% 50%;">1</div>
<div style="position:absolute;left:19px;top:690px;width:3px;height:1px;background:#6a6a6a;"></div>
<div style="position:absolute;left:16px;top:716px;width:9px;height:1px;background:#6a6a6a;"></div>
<div style="position:absolute;left:19px;top:743px;width:3px;height:1px;background:#6a6a6a;"></div>
<div class="t" style="left:13px;top:760.00px;width:17px;height:19px;font-size:17px;line-height:19px;color:#5a5a5a;text-align:center;transform:rotate(-90deg);transform-origin:50% 50%;">2</div>
<div style="position:absolute;left:19px;top:795px;width:3px;height:1px;background:#6a6a6a;"></div>
<div style="position:absolute;left:16px;top:822px;width:9px;height:1px;background:#6a6a6a;"></div>
<div style="position:absolute;left:19px;top:848px;width:3px;height:1px;background:#6a6a6a;"></div>
<div class="t" style="left:13px;top:865.90px;width:17px;height:19px;font-size:17px;line-height:19px;color:#5a5a5a;text-align:center;transform:rotate(-90deg);transform-origin:50% 50%;">3</div>
<div style="position:absolute;left:19px;top:901px;width:3px;height:1px;background:#6a6a6a;"></div>
<div style="position:absolute;left:16px;top:928px;width:9px;height:1px;background:#6a6a6a;"></div>
<div style="position:absolute;left:19px;top:954px;width:3px;height:1px;background:#6a6a6a;"></div>
<div class="t" style="left:13px;top:971.80px;width:17px;height:19px;font-size:17px;line-height:19px;color:#5a5a5a;text-align:center;transform:rotate(-90deg);transform-origin:50% 50%;">4</div>
<div style="position:absolute;left:438px;top:558px;width:1.15px;height:365px;background:#000;"></div>
<div style="position:absolute;left:798px;top:558px;width:1.15px;height:365px;background:#000;"></div>
<div style="position:absolute;left:1157px;top:558px;width:1.15px;height:365px;background:#000;"></div>
<div style="position:absolute;left:1517px;top:558px;width:1.15px;height:365px;background:#000;"></div>
<div style="position:absolute;left:1877px;top:558px;width:1.15px;height:365px;background:#000;"></div>
<div style="position:absolute;left:2237px;top:558px;width:1.15px;height:365px;background:#000;"></div>
<div style="position:absolute;left:438px;top:558px;width:1800px;height:2px;background:#000;"></div>
<div style="position:absolute;left:438px;top:610px;width:1800px;height:2px;background:#000;"></div>
<div style="position:absolute;left:438px;top:662px;width:1800px;height:2px;background:#000;"></div>
<div style="position:absolute;left:438px;top:714px;width:1800px;height:2px;background:#000;"></div>
<div style="position:absolute;left:438px;top:766px;width:1800px;height:2px;background:#000;"></div>
<div style="position:absolute;left:438px;top:818px;width:1800px;height:2px;background:#000;"></div>
<div style="position:absolute;left:438px;top:870px;width:1800px;height:2px;background:#000;"></div>
<div style="position:absolute;left:438px;top:922px;width:1800px;height:1.2px;background:#000;"></div>
<div style="position:absolute;left:155px;top:278px;width:370px;height:608px;background:#fff;border:1.3px solid #bdbdbd;border-radius:8px;box-sizing:border-box;box-shadow:1px 8px 20px rgba(0,0,0,0.17);"></div>
<div class="t" style="left:182.20px;top:295.19px;font-size:21.5px;color:#1e1e1e;font-weight:bold;transform:scaleX(0.9833);">Таблиця 5x7</div>
<svg style="position:absolute;left:155px;top:330px;" width="350" height="280" viewBox="0 0 350 280"><rect x="9" y="7" width="29" height="29" fill="none" stroke="#e8430b" stroke-width="2.2"/><rect x="11.099999999999994" y="9.100000000000023" width="24.8" height="24.8" fill="none" stroke="#ffe08f" stroke-width="2"/><rect x="42" y="7" width="29" height="29" fill="none" stroke="#e8430b" stroke-width="2.2"/><rect x="44.099999999999994" y="9.100000000000023" width="24.8" height="24.8" fill="none" stroke="#ffe08f" stroke-width="2"/><rect x="75" y="7" width="29" height="29" fill="none" stroke="#e8430b" stroke-width="2.2"/><rect x="77.1" y="9.100000000000023" width="24.8" height="24.8" fill="none" stroke="#ffe08f" stroke-width="2"/><rect x="108" y="7" width="29" height="29" fill="none" stroke="#e8430b" stroke-width="2.2"/><rect x="110.10000000000002" y="9.100000000000023" width="24.8" height="24.8" fill="none" stroke="#ffe08f" stroke-width="2"/><rect x="141" y="7" width="29" height="29" fill="none" stroke="#e8430b" stroke-width="2.2"/><rect x="143.10000000000002" y="9.100000000000023" width="24.8" height="24.8" fill="none" stroke="#ffe08f" stroke-width="2"/><rect x="175.5" y="8.5" width="27" height="27" fill="none" stroke="#646464" stroke-width="1.1"/><rect x="208.5" y="8.5" width="27" height="27" fill="none" stroke="#646464" stroke-width="1.1"/><rect x="241.5" y="8.5" width="27" height="27" fill="none" stroke="#646464" stroke-width="1.1"/><rect x="274.5" y="8.5" width="27" height="27" fill="none" stroke="#646464" stroke-width="1.1"/><rect x="307.5" y="8.5" width="27" height="27" fill="none" stroke="#646464" stroke-width="1.1"/><rect x="9" y="40" width="29" height="29" fill="none" stroke="#e8430b" stroke-width="2.2"/><rect x="11.099999999999994" y="42.10000000000002" width="24.8" height="24.8" fill="none" stroke="#ffe08f" stroke-width="2"/><rect x="42" y="40" width="29" height="29" fill="none" stroke="#e8430b" stroke-width="2.2"/><rect x="44.099999999999994" y="42.10000000000002" width="24.8" height="24.8" fill="none" stroke="#ffe08f" stroke-width="2"/><rect x="75" y="40" width="29" height="29" fill="none" stroke="#e8430b" stroke-width="2.2"/><rect x="77.1" y="42.10000000000002" width="24.8" height="24.8" fill="none" stroke="#ffe08f" stroke-width="2"/><rect x="108" y="40" width="29" height="29" fill="none" stroke="#e8430b" stroke-width="2.2"/><rect x="110.10000000000002" y="42.10000000000002" width="24.8" height="24.8" fill="none" stroke="#ffe08f" stroke-width="2"/><rect x="141" y="40" width="29" height="29" fill="none" stroke="#e8430b" stroke-width="2.2"/><rect x="143.10000000000002" y="42.10000000000002" width="24.8" height="24.8" fill="none" stroke="#ffe08f" stroke-width="2"/><rect x="175.5" y="41.5" width="27" height="27" fill="none" stroke="#646464" stroke-width="1.1"/><rect x="208.5" y="41.5" width="27" height="27" fill="none" stroke="#646464" stroke-width="1.1"/><rect x="241.5" y="41.5" width="27" height="27" fill="none" stroke="#646464" stroke-width="1.1"/><rect x="274.5" y="41.5" width="27" height="27" fill="none" stroke="#646464" stroke-width="1.1"/><rect x="307.5" y="41.5" width="27" height="27" fill="none" stroke="#646464" stroke-width="1.1"/><rect x="9" y="73" width="29" height="29" fill="none" stroke="#e8430b" stroke-width="2.2"/><rect x="11.099999999999994" y="75.10000000000002" width="24.8" height="24.8" fill="none" stroke="#ffe08f" stroke-width="2"/><rect x="42" y="73" width="29" height="29" fill="none" stroke="#e8430b" stroke-width="2.2"/><rect x="44.099999999999994" y="75.10000000000002" width="24.8" height="24.8" fill="none" stroke="#ffe08f" stroke-width="2"/><rect x="75" y="73" width="29" height="29" fill="none" stroke="#e8430b" stroke-width="2.2"/><rect x="77.1" y="75.10000000000002" width="24.8" height="24.8" fill="none" stroke="#ffe08f" stroke-width="2"/><rect x="108" y="73" width="29" height="29" fill="none" stroke="#e8430b" stroke-width="2.2"/><rect x="110.10000000000002" y="75.10000000000002" width="24.8" height="24.8" fill="none" stroke="#ffe08f" stroke-width="2"/><rect x="141" y="73" width="29" height="29" fill="none" stroke="#e8430b" stroke-width="2.2"/><rect x="143.10000000000002" y="75.10000000000002" width="24.8" height="24.8" fill="none" stroke="#ffe08f" stroke-width="2"/><rect x="175.5" y="74.5" width="27" height="27" fill="none" stroke="#646464" stroke-width="1.1"/><rect x="208.5" y="74.5" width="27" height="27" fill="none" stroke="#646464" stroke-width="1.1"/><rect x="241.5" y="74.5" width="27" height="27" fill="none" stroke="#646464" stroke-width="1.1"/><rect x="274.5" y="74.5" width="27" height="27" fill="none" stroke="#646464" stroke-width="1.1"/><rect x="307.5" y="74.5" width="27" height="27" fill="none" stroke="#646464" stroke-width="1.1"/><rect x="9" y="106" width="29" height="29" fill="none" stroke="#e8430b" stroke-width="2.2"/><rect x="11.099999999999994" y="108.10000000000002" width="24.8" height="24.8" fill="none" stroke="#ffe08f" stroke-width="2"/><rect x="42" y="106" width="29" height="29" fill="none" stroke="#e8430b" stroke-width="2.2"/><rect x="44.099999999999994" y="108.10000000000002" width="24.8" height="24.8" fill="none" stroke="#ffe08f" stroke-width="2"/><rect x="75" y="106" width="29" height="29" fill="none" stroke="#e8430b" stroke-width="2.2"/><rect x="77.1" y="108.10000000000002" width="24.8" height="24.8" fill="none" stroke="#ffe08f" stroke-width="2"/><rect x="108" y="106" width="29" height="29" fill="none" stroke="#e8430b" stroke-width="2.2"/><rect x="110.10000000000002" y="108.10000000000002" width="24.8" height="24.8" fill="none" stroke="#ffe08f" stroke-width="2"/><rect x="141" y="106" width="29" height="29" fill="none" stroke="#e8430b" stroke-width="2.2"/><rect x="143.10000000000002" y="108.10000000000002" width="24.8" height="24.8" fill="none" stroke="#ffe08f" stroke-width="2"/><rect x="175.5" y="107.5" width="27" height="27" fill="none" stroke="#646464" stroke-width="1.1"/><rect x="208.5" y="107.5" width="27" height="27" fill="none" stroke="#646464" stroke-width="1.1"/><rect x="241.5" y="107.5" width="27" height="27" fill="none" stroke="#646464" stroke-width="1.1"/><rect x="274.5" y="107.5" width="27" height="27" fill="none" stroke="#646464" stroke-width="1.1"/><rect x="307.5" y="107.5" width="27" height="27" fill="none" stroke="#646464" stroke-width="1.1"/><rect x="9" y="139" width="29" height="29" fill="none" stroke="#e8430b" stroke-width="2.2"/><rect x="11.099999999999994" y="141.10000000000002" width="24.8" height="24.8" fill="none" stroke="#ffe08f" stroke-width="2"/><rect x="42" y="139" width="29" height="29" fill="none" stroke="#e8430b" stroke-width="2.2"/><rect x="44.099999999999994" y="141.10000000000002" width="24.8" height="24.8" fill="none" stroke="#ffe08f" stroke-width="2"/><rect x="75" y="139" width="29" height="29" fill="none" stroke="#e8430b" stroke-width="2.2"/><rect x="77.1" y="141.10000000000002" width="24.8" height="24.8" fill="none" stroke="#ffe08f" stroke-width="2"/><rect x="108" y="139" width="29" height="29" fill="none" stroke="#e8430b" stroke-width="2.2"/><rect x="110.10000000000002" y="141.10000000000002" width="24.8" height="24.8" fill="none" stroke="#ffe08f" stroke-width="2"/><rect x="141" y="139" width="29" height="29" fill="none" stroke="#e8430b" stroke-width="2.2"/><rect x="143.10000000000002" y="141.10000000000002" width="24.8" height="24.8" fill="none" stroke="#ffe08f" stroke-width="2"/><rect x="175.5" y="140.5" width="27" height="27" fill="none" stroke="#646464" stroke-width="1.1"/><rect x="208.5" y="140.5" width="27" height="27" fill="none" stroke="#646464" stroke-width="1.1"/><rect x="241.5" y="140.5" width="27" height="27" fill="none" stroke="#646464" stroke-width="1.1"/><rect x="274.5" y="140.5" width="27" height="27" fill="none" stroke="#646464" stroke-width="1.1"/><rect x="307.5" y="140.5" width="27" height="27" fill="none" stroke="#646464" stroke-width="1.1"/><rect x="9" y="172" width="29" height="29" fill="none" stroke="#e8430b" stroke-width="2.2"/><rect x="11.099999999999994" y="174.10000000000002" width="24.8" height="24.8" fill="none" stroke="#ffe08f" stroke-width="2"/><rect x="42" y="172" width="29" height="29" fill="none" stroke="#e8430b" stroke-width="2.2"/><rect x="44.099999999999994" y="174.10000000000002" width="24.8" height="24.8" fill="none" stroke="#ffe08f" stroke-width="2"/><rect x="75" y="172" width="29" height="29" fill="none" stroke="#e8430b" stroke-width="2.2"/><rect x="77.1" y="174.10000000000002" width="24.8" height="24.8" fill="none" stroke="#ffe08f" stroke-width="2"/><rect x="108" y="172" width="29" height="29" fill="none" stroke="#e8430b" stroke-width="2.2"/><rect x="110.10000000000002" y="174.10000000000002" width="24.8" height="24.8" fill="none" stroke="#ffe08f" stroke-width="2"/><rect x="141" y="172" width="29" height="29" fill="none" stroke="#e8430b" stroke-width="2.2"/><rect x="143.10000000000002" y="174.10000000000002" width="24.8" height="24.8" fill="none" stroke="#ffe08f" stroke-width="2"/><rect x="175.5" y="173.5" width="27" height="27" fill="none" stroke="#646464" stroke-width="1.1"/><rect x="208.5" y="173.5" width="27" height="27" fill="none" stroke="#646464" stroke-width="1.1"/><rect x="241.5" y="173.5" width="27" height="27" fill="none" stroke="#646464" stroke-width="1.1"/><rect x="274.5" y="173.5" width="27" height="27" fill="none" stroke="#646464" stroke-width="1.1"/><rect x="307.5" y="173.5" width="27" height="27" fill="none" stroke="#646464" stroke-width="1.1"/><rect x="9" y="205" width="29" height="29" fill="none" stroke="#e8430b" stroke-width="2.2"/><rect x="11.099999999999994" y="207.10000000000002" width="24.8" height="24.8" fill="none" stroke="#ffe08f" stroke-width="2"/><rect x="42" y="205" width="29" height="29" fill="none" stroke="#e8430b" stroke-width="2.2"/><rect x="44.099999999999994" y="207.10000000000002" width="24.8" height="24.8" fill="none" stroke="#ffe08f" stroke-width="2"/><rect x="75" y="205" width="29" height="29" fill="none" stroke="#e8430b" stroke-width="2.2"/><rect x="77.1" y="207.10000000000002" width="24.8" height="24.8" fill="none" stroke="#ffe08f" stroke-width="2"/><rect x="108" y="205" width="29" height="29" fill="none" stroke="#e8430b" stroke-width="2.2"/><rect x="110.10000000000002" y="207.10000000000002" width="24.8" height="24.8" fill="none" stroke="#ffe08f" stroke-width="2"/><rect x="141" y="205" width="29" height="29" fill="none" stroke="#e8430b" stroke-width="2.2"/><rect x="143.10000000000002" y="207.10000000000002" width="24.8" height="24.8" fill="none" stroke="#ffe08f" stroke-width="2"/><rect x="175.5" y="206.5" width="27" height="27" fill="none" stroke="#646464" stroke-width="1.1"/><rect x="208.5" y="206.5" width="27" height="27" fill="none" stroke="#646464" stroke-width="1.1"/><rect x="241.5" y="206.5" width="27" height="27" fill="none" stroke="#646464" stroke-width="1.1"/><rect x="274.5" y="206.5" width="27" height="27" fill="none" stroke="#646464" stroke-width="1.1"/><rect x="307.5" y="206.5" width="27" height="27" fill="none" stroke="#646464" stroke-width="1.1"/><rect x="10.5" y="239.5" width="27" height="27" fill="none" stroke="#646464" stroke-width="1.1"/><rect x="43.5" y="239.5" width="27" height="27" fill="none" stroke="#646464" stroke-width="1.1"/><rect x="76.5" y="239.5" width="27" height="27" fill="none" stroke="#646464" stroke-width="1.1"/><rect x="109.5" y="239.5" width="27" height="27" fill="none" stroke="#646464" stroke-width="1.1"/><rect x="142.5" y="239.5" width="27" height="27" fill="none" stroke="#646464" stroke-width="1.1"/><rect x="175.5" y="239.5" width="27" height="27" fill="none" stroke="#646464" stroke-width="1.1"/><rect x="208.5" y="239.5" width="27" height="27" fill="none" stroke="#646464" stroke-width="1.1"/><rect x="241.5" y="239.5" width="27" height="27" fill="none" stroke="#646464" stroke-width="1.1"/><rect x="274.5" y="239.5" width="27" height="27" fill="none" stroke="#646464" stroke-width="1.1"/><rect x="307.5" y="239.5" width="27" height="27" fill="none" stroke="#646464" stroke-width="1.1"/></svg>
<div style="position:absolute;left:158px;top:619px;width:364px;height:1.5px;background:#cfcfcf;"></div>
<svg style="position:absolute;left:179px;top:634px;" width="26" height="26" viewBox="0 0 26 26"><rect x="1" y="1" width="23" height="23" fill="#fff" stroke="#4a4a4a" stroke-width="1.8"/>
<rect x="1.9" y="1.9" width="21.2" height="4" fill="#c4c4c4"/>
<line x1="1" y1="6.5" x2="24" y2="6.5" stroke="#4a4a4a" stroke-width="1.5"/>
<line x1="1" y1="12.5" x2="24" y2="12.5" stroke="#4a4a4a" stroke-width="1.5"/>
<line x1="1" y1="18.5" x2="24" y2="18.5" stroke="#4a4a4a" stroke-width="1.5"/>
<line x1="8.5" y1="6.5" x2="8.5" y2="24" stroke="#4a4a4a" stroke-width="1.5"/>
<line x1="16.5" y1="6.5" x2="16.5" y2="24" stroke="#4a4a4a" stroke-width="1.5"/></svg>
<div class="t" style="left:221.40px;top:637.12px;font-size:20.6px;color:#242424;transform:scaleX(0.9845);">Вставити таблицю...</div>
<div style="position:absolute;left:221px;top:658px;width:12px;height:1.3px;background:#242424;"></div>
<svg style="position:absolute;left:179px;top:686px;" width="26" height="26" viewBox="0 0 26 26"><rect x="1" y="1" width="23" height="23" fill="#fff" stroke="#4a4a4a" stroke-width="1.8"/>
<rect x="1.9" y="1.9" width="21.2" height="4" fill="#c4c4c4"/>
<line x1="1" y1="6.5" x2="24" y2="6.5" stroke="#4a4a4a" stroke-width="1.5"/>
<line x1="1" y1="12.5" x2="24" y2="12.5" stroke="#4a4a4a" stroke-width="1.5"/>
<line x1="1" y1="18.5" x2="24" y2="18.5" stroke="#4a4a4a" stroke-width="1.5"/>
<line x1="8.5" y1="6.5" x2="8.5" y2="24" stroke="#4a4a4a" stroke-width="1.5"/>
<line x1="16.5" y1="6.5" x2="16.5" y2="24" stroke="#4a4a4a" stroke-width="1.5"/><path d="M11 20 L13 14.5 L21.5 3 Q23.5 1.5 25 3 Q26 4.5 24.5 6 L15.5 17.5 Z" fill="#fff" stroke="#1b7fd0" stroke-width="1.6"/><path d="M11 21 L13 15" stroke="#1b7fd0" stroke-width="2"/></svg>
<div class="t" style="left:221.40px;top:689.72px;font-size:20.6px;color:#242424;transform:scaleX(1.0090);">Накреслити таблицю</div>
<div style="position:absolute;left:221px;top:710.5px;width:14px;height:1.3px;background:#242424;"></div>
<svg style="position:absolute;left:179px;top:739px;" width="26" height="26" viewBox="0 0 26 26"><g stroke="#b0b0b0" stroke-width="1.7" fill="none">
<line x1="2" y1="2" x2="12" y2="2"/><line x1="2" y1="6" x2="12" y2="6"/>
<path d="M4 10 Q0 14 3 18 L8 19 M5.5 16.5 L8 19 L5.5 21.5"/>
<rect x="15.5" y="1.5" width="8" height="21"/><rect x="18" y="6" width="3" height="2.5"/><rect x="18" y="14" width="3" height="2.5"/>
</g></svg>
<div class="t" style="left:221.70px;top:741.52px;font-size:20.6px;color:#a6a6a6;transform:scaleX(1.0054);">Перетворити на таблицю...</div>
<div style="position:absolute;left:221px;top:762.5px;width:14px;height:1.3px;background:#a6a6a6;"></div>
<svg style="position:absolute;left:179px;top:790px;" width="26" height="26" viewBox="0 0 26 26"><rect x="1" y="1" width="23" height="23" fill="#fff" stroke="#4a4a4a" stroke-width="1.8"/>
<rect x="1.9" y="1.9" width="21.2" height="4" fill="#c4c4c4"/>
<line x1="1" y1="6.5" x2="24" y2="6.5" stroke="#4a4a4a" stroke-width="1.5"/>
<line x1="1" y1="12.5" x2="24" y2="12.5" stroke="#4a4a4a" stroke-width="1.5"/>
<line x1="1" y1="18.5" x2="24" y2="18.5" stroke="#4a4a4a" stroke-width="1.5"/>
<line x1="8.5" y1="6.5" x2="8.5" y2="24" stroke="#4a4a4a" stroke-width="1.5"/>
<line x1="16.5" y1="6.5" x2="16.5" y2="24" stroke="#4a4a4a" stroke-width="1.5"/><rect x="10.5" y="10" width="14.5" height="14.5" fill="#1e7a3c"/><path d="M14 13 L21.5 22 M21.5 13 L14 22" stroke="#fff" stroke-width="1.8"/></svg>
<div class="t" style="left:221.00px;top:794.02px;font-size:20.6px;color:#242424;transform:scaleX(0.9790);">Електронна таблиця Excel</div>
<div style="position:absolute;left:232px;top:815px;width:12px;height:1.3px;background:#242424;"></div>
<svg style="position:absolute;left:179px;top:842px;" width="26" height="26" viewBox="0 0 26 26"><rect x="1" y="1" width="23" height="23" fill="#fff" stroke="#4a4a4a" stroke-width="1.8"/>
<rect x="1.9" y="1.9" width="21.2" height="4" fill="#c4c4c4"/>
<line x1="1" y1="6.5" x2="24" y2="6.5" stroke="#4a4a4a" stroke-width="1.5"/>
<line x1="1" y1="12.5" x2="24" y2="12.5" stroke="#4a4a4a" stroke-width="1.5"/>
<line x1="1" y1="18.5" x2="24" y2="18.5" stroke="#4a4a4a" stroke-width="1.5"/>
<line x1="8.5" y1="6.5" x2="8.5" y2="24" stroke="#4a4a4a" stroke-width="1.5"/>
<line x1="16.5" y1="6.5" x2="16.5" y2="24" stroke="#4a4a4a" stroke-width="1.5"/></svg>
<div class="t" style="left:221.00px;top:845.52px;font-size:20.6px;color:#242424;">Експрес-таблиці</div>
<div style="position:absolute;left:221px;top:866.5px;width:12px;height:1.3px;background:#242424;"></div>
<svg style="position:absolute;left:497px;top:845px;" width="13" height="19" viewBox="0 0 13 19"><polyline points="2,1.5 10,9.5 2,17.5" fill="none" stroke="#333" stroke-width="1.6"/></svg>
<div class="t" style="left:12.40px;top:1011.08px;font-size:18.9px;color:#333333;transform:scaleX(0.9747);">Сторінка 1 із 1</div>
<div class="t" style="left:169.80px;top:1011.08px;font-size:18.9px;color:#333333;transform:scaleX(0.9716);">Кількість слів: 0</div>
<div class="t" style="left:335.00px;top:1011.08px;font-size:18.9px;color:#333333;transform:scaleX(0.9892);">українська</div>
<div class="t" style="left:458.60px;top:1011.08px;font-size:18.9px;color:#333333;transform:scaleX(0.9848);">Завбачливий ввід тексту: увімкнуто</div>
<svg style="position:absolute;left:796px;top:1008px;" width="30" height="27" viewBox="0 0 30 27"><g fill="none" stroke="#333" stroke-width="1.7" stroke-linecap="round" stroke-linejoin="round">
<circle cx="11" cy="3.5" r="2.6"/>
<path d="M1.5 7.5 Q6 10.5 11 10 Q16 10.5 20.5 7.5"/>
<path d="M7.5 10.5 Q8.5 16 6.5 21 Q5.5 24.5 8.5 24"/>
<path d="M14.5 10.5 Q14.5 14 13.5 17"/>
<path d="M14 20 L18 24 L26.5 15.5"/>
</g></svg>
<div class="t" style="left:827.30px;top:1011.08px;font-size:18.9px;color:#333333;transform:scaleX(0.9880);">Спеціальні можливості: усе добре</div>
<svg style="position:absolute;left:1856px;top:1007px;" width="30" height="28" viewBox="0 0 30 28"><g fill="none" stroke="#333" stroke-width="1.8">
<path d="M1.5 7 V1.5 H7 M21 1.5 H26.5 V7 M1.5 20.5 V26 H7 M21 26 H26.5 V20.5"/>
<path d="M8 5.5 H15.5 L20 10 V22 H8 Z M15.5 5.5 V10 H20"/>
</g></svg>
<div class="t" style="left:1888.50px;top:1011.08px;font-size:18.9px;color:#333333;transform:scaleX(0.9482);">Сфокусуватися</div>
<svg style="position:absolute;left:2058px;top:1008px;" width="27" height="26" viewBox="0 0 27 26"><g fill="none" stroke="#333" stroke-width="1.8">
<path d="M1.5 3 Q6.5 1 12.5 3.5 Q18.5 1 24 3 V23 Q18.5 21 12.5 23.5 Q6.5 21 1.5 23 Z"/><line x1="12.5" y1="3.5" x2="12.5" y2="23.5"/>
<g stroke-width="1.3"><line x1="5" y1="8" x2="10" y2="8"/><line x1="5" y1="11.5" x2="10" y2="11.5"/><line x1="5" y1="15" x2="10" y2="15"/><line x1="15" y1="8" x2="20" y2="8"/><line x1="15" y1="11.5" x2="20" y2="11.5"/><line x1="15" y1="15" x2="20" y2="15"/></g></g></svg>
<div style="position:absolute;left:2107px;top:1002px;width:70px;height:36px;background:#dedede;"></div>
<svg style="position:absolute;left:2129px;top:1008px;" width="25" height="27" viewBox="0 0 25 27"><g fill="none" stroke="#333" stroke-width="1.8"><rect x="2" y="1.5" width="20" height="24"/>
<g stroke-width="1.4"><line x1="6" y1="6.5" x2="18" y2="6.5"/><line x1="6" y1="10" x2="18" y2="10"/><line x1="6" y1="13.5" x2="18" y2="13.5"/><line x1="6" y1="17" x2="18" y2="17"/><line x1="6" y1="20.5" x2="18" y2="20.5"/></g></g></svg>
<svg style="position:absolute;left:2198px;top:1008px;" width="29" height="27" viewBox="0 0 29 27"><g fill="none" stroke="#333" stroke-width="1.8"><path d="M13 23.5 H2 V1.5 H22.5 V10"/>
<g stroke-width="1.4"><line x1="5.5" y1="6" x2="19" y2="6"/><line x1="5.5" y1="9.5" x2="19" y2="9.5"/><line x1="5.5" y1="13" x2="12" y2="13"/><line x1="5.5" y1="16.5" x2="11" y2="16.5"/></g>
<circle cx="20" cy="19" r="7"/><ellipse cx="20" cy="19" rx="3" ry="7"/><line x1="13" y1="17" x2="27" y2="17"/><line x1="13" y1="21" x2="27" y2="21"/></g></svg>
<div style="position:absolute;left:2257px;top:1019.5px;width:14.5px;height:1.6px;background:#444;"></div>
<div style="position:absolute;left:2281.5px;top:1019.8px;width:173px;height:1.5px;background:#5c5c5c;"></div>
<div style="position:absolute;left:2367px;top:1015px;width:1.6px;height:11px;background:#5c5c5c;"></div>
<div style="position:absolute;left:2377px;top:1011px;width:9.5px;height:20px;background:#5c5c5c;border-radius:1px;"></div>
<div style="position:absolute;left:2464.5px;top:1019.5px;width:14px;height:1.6px;background:#444;"></div>
<div style="position:absolute;left:2470.7px;top:1013px;width:1.6px;height:14.5px;background:#444;"></div>
<div class="t" style="left:2502.20px;top:1011.08px;font-size:18.9px;color:#333333;transform:scaleX(0.9027);">160%</div>
</body></html>
